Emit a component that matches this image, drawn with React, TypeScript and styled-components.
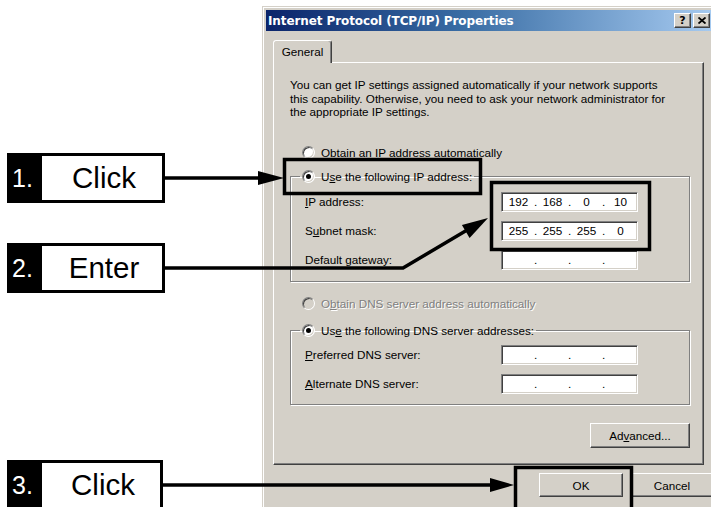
import styled, { createGlobalStyle } from "styled-components";

const FACE = "#d4d0c8";

const GlobalStyle = createGlobalStyle`
  html, body {
    margin: 0;
    padding: 0;
    background: #fff;
  }
  body {
    font-family: "Liberation Sans", Arial, sans-serif;
  }
`;

const Page = styled.div`
  position: relative;
  width: 711px;
  height: 507px;
  overflow: hidden;
  display: flex;
  background: #fff;
`;

/* ---------- left callouts ---------- */

const Callouts = styled.div`
  width: 262px;
  flex: none;
  display: flex;
  flex-direction: column;
  padding-left: 7px;
  box-sizing: border-box;
`;

const Callout = styled.div<{ $top: number; $width: number }>`
  margin-top: ${(p) => p.$top}px;
  width: ${(p) => p.$width}px;
  height: 50px;
  flex: none;
  box-sizing: border-box;
  border: 3px solid #000;
  display: flex;
  align-items: center;
  background: #fff;
`;

const StepNo = styled.div`
  align-self: stretch;
  width: 32px;
  flex: none;
  background: #000;
  color: #fff;
  font-size: 25px;
  display: flex;
  align-items: center;
  padding-left: 2px;
  box-sizing: border-box;
`;

const StepLabel = styled.div`
  flex: 1;
  text-align: center;
  font-size: 29.5px;
  color: #000;
  padding-left: 4px;
`;

/* ---------- dialog ---------- */

const Dialog = styled.div`
  margin-top: 6px;
  width: 454px;
  height: 520px;
  flex: none;
  box-sizing: border-box;
  background: ${FACE};
  border: 1px solid;
  border-color: ${FACE} #404040 #404040 ${FACE};
  box-shadow: inset 1px 1px #fff, inset -1px -1px #808080;
  padding: 3px;
  font-family: "Liberation Sans", Arial, sans-serif;
  font-size: 11.7px;
  color: #000;
`;

const TitleBar = styled.div`
  height: 21px;
  display: flex;
  align-items: center;
  justify-content: space-between;
  padding: 0 2px 0 2px;
  background: linear-gradient(90deg, #0a246a 0%, #3a6ea5 45%, #a6caf0 100%);
`;

const Title = styled.span`
  font-family: "DejaVu Sans", Verdana, sans-serif;
  font-weight: bold;
  font-size: 12px;
  color: #fff;
  letter-spacing: -0.1px;
`;

const CaptionButtons = styled.div`
  display: flex;
  gap: 2px;
`;

const CaptionButton = styled.div`
  width: 17px;
  height: 15px;
  box-sizing: border-box;
  background: ${FACE};
  border: 1px solid;
  border-color: #fff #404040 #404040 #fff;
  box-shadow: inset -1px -1px #808080;
  display: flex;
  align-items: center;
  justify-content: center;
  font-family: "DejaVu Sans", sans-serif;
  font-weight: bold;
  font-size: 11px;
  line-height: 1;
  color: #000;
`;

const DialogBody = styled.div`
  padding: 9px 5px 0 7px;
`;

const TabStrip = styled.div`
  display: flex;
  height: 22px;
`;

const Tab = styled.div`
  position: relative;
  z-index: 1;
  width: 59px;
  height: 23px;
  box-sizing: border-box;
  background: ${FACE};
  border: 1px solid;
  border-bottom: none;
  border-color: #fff #404040 transparent #fff;
  border-radius: 3px 3px 0 0;
  box-shadow: inset -1px 0 #808080;
  display: flex;
  align-items: center;
  justify-content: center;
  padding-bottom: 2px;
`;

const Panel = styled.div`
  width: 431px;
  height: 403px;
  box-sizing: border-box;
  border: 1px solid;
  border-color: #fff #404040 #404040 #fff;
  box-shadow: inset -1px -1px #808080;
  padding: 15px 13px 0 16px;
  display: flex;
  flex-direction: column;
`;

const Intro = styled.p`
  margin: 0;
  line-height: 13.5px;
  white-space: nowrap;
`;

const RadioRow = styled.div<{ $top: number; $disabled?: boolean }>`
  display: flex;
  align-items: center;
  gap: 6px;
  height: 16px;
  margin: ${(p) => p.$top}px 0 0 12px;
  white-space: nowrap;
  color: ${(p) => (p.$disabled ? "#808080" : "#000")};
  text-shadow: ${(p) => (p.$disabled ? "1px 1px 0 #fff" : "none")};
`;

const Radio = styled.span<{ $checked?: boolean; $disabled?: boolean }>`
  position: relative;
  width: 13px;
  height: 13px;
  flex: none;
  box-sizing: border-box;
  border-radius: 50%;
  background: ${(p) => (p.$disabled ? FACE : "#fff")};
  border: 1px solid;
  border-color: #808080 #fff #fff #808080;
  box-shadow: inset 1px 1px #404040, inset -1px -1px ${FACE};
  &::after {
    content: "";
    display: ${(p) => (p.$checked ? "block" : "none")};
    position: absolute;
    left: 3px;
    top: 3px;
    width: 5px;
    height: 5px;
    border-radius: 50%;
    background: #000;
  }
`;

const Group = styled.fieldset<{ $top: number; $bottom: number }>`
  margin: ${(p) => p.$top}px 0 0 0;
  padding: 0 51px ${(p) => p.$bottom}px 9px;
  width: 400px;
  min-inline-size: 0;
  box-sizing: border-box;
  border: 1px solid #808080;
  box-shadow: 1px 1px 0 #fff, inset 1px 1px 0 #fff;
`;

const GroupLegend = styled.legend`
  padding: 0 2px;
  display: flex;
  align-items: center;
  gap: 6px;
  height: 16px;
  white-space: nowrap;
`;

const FieldGrid = styled.div<{ $top: number }>`
  margin-top: ${(p) => p.$top}px;
  display: grid;
  grid-template-columns: 1fr 137px;
  row-gap: 9px;
  align-items: center;
`;

const FieldLabel = styled.span`
  padding-left: 5px;
  white-space: nowrap;
`;

const IpField = styled.div`
  height: 20px;
  box-sizing: border-box;
  background: #fff;
  border: 1px solid;
  border-color: #808080 #fff #fff #808080;
  box-shadow: inset 1px 1px #404040, inset -1px -1px ${FACE};
  display: flex;
  align-items: center;
  padding: 0 2px;
`;

const Octet = styled.span`
  flex: 1;
  text-align: center;
`;

const Dot = styled.span`
  width: 5px;
  text-align: center;
`;

const ButtonRow = styled.div<{ $top: number }>`
  display: flex;
  justify-content: flex-end;
  gap: 7px;
  margin-top: ${(p) => p.$top}px;
`;

const Button = styled.div<{ $width: number; $height: number }>`
  width: ${(p) => p.$width}px;
  height: ${(p) => p.$height}px;
  box-sizing: border-box;
  background: ${FACE};
  border: 1px solid;
  border-color: #fff #404040 #404040 #fff;
  box-shadow: inset -1px -1px #808080;
  display: flex;
  align-items: center;
  justify-content: center;
`;

const Footer = styled(ButtonRow)`
  width: 441px;
`;

/* ---------- annotation overlay ---------- */

const Overlay = styled.svg`
  position: absolute;
  left: 0;
  top: 0;
  width: 711px;
  height: 507px;
  pointer-events: none;
`;

function IpInput({ value }: { value: string[] }) {
  return (
    <IpField>
      <Octet>{value[0]}</Octet>
      <Dot>.</Dot>
      <Octet>{value[1]}</Octet>
      <Dot>.</Dot>
      <Octet>{value[2]}</Octet>
      <Dot>.</Dot>
      <Octet>{value[3]}</Octet>
    </IpField>
  );
}

const empty = ["", "", "", ""];

export default function App() {
  return (
    <Page>
      <GlobalStyle />
      <Callouts>
        <Callout $top={153} $width={158}>
          <StepNo>1.</StepNo>
          <StepLabel>Click</StepLabel>
        </Callout>
        <Callout $top={40} $width={158}>
          <StepNo>2.</StepNo>
          <StepLabel>Enter</StepLabel>
        </Callout>
        <Callout $top={167} $width={156}>
          <StepNo>3.</StepNo>
          <StepLabel>Click</StepLabel>
        </Callout>
      </Callouts>

      <Dialog>
        <TitleBar>
          <Title>Internet Protocol (TCP/IP) Properties</Title>
          <CaptionButtons>
            <CaptionButton>?</CaptionButton>
            <CaptionButton>
              <svg width="8" height="7" viewBox="0 0 8 7">
                <path d="M0.5 0.5 L7.5 6.5 M7.5 0.5 L0.5 6.5" stroke="#000" strokeWidth="1.8" />
              </svg>
            </CaptionButton>
          </CaptionButtons>
        </TitleBar>

        <DialogBody>
          <TabStrip>
            <Tab>General</Tab>
          </TabStrip>
          <Panel>
            <Intro>
              You can get IP settings assigned automatically if your network supports
              <br />
              this capability. Otherwise, you need to ask your network administrator for
              <br />
              the appropriate IP settings.
            </Intro>

            <RadioRow $top={26}>
              <Radio />
              <span>
                <u>O</u>btain an IP address automatically
              </span>
            </RadioRow>

            <Group $top={8} $bottom={11}>
              <GroupLegend>
                <Radio $checked />
                <span>
                  U<u>s</u>e the following IP address:
                </span>
              </GroupLegend>
              <FieldGrid $top={7}>
                <FieldLabel>
                  <u>I</u>P address:
                </FieldLabel>
                <IpInput value={["192", "168", "0", "10"]} />
                <FieldLabel>
                  S<u>u</u>bnet mask:
                </FieldLabel>
                <IpInput value={["255", "255", "255", "0"]} />
                <FieldLabel>
                  Default <u>g</u>ateway:
                </FieldLabel>
                <IpInput value={empty} />
              </FieldGrid>
            </Group>

            <RadioRow $top={14} $disabled>
              <Radio $disabled />
              <span>
                O<u>b</u>tain DNS server address automatically
              </span>
            </RadioRow>

            <Group $top={11} $bottom={10}>
              <GroupLegend>
                <Radio $checked />
                <span>
                  Us<u>e</u> the following DNS server addresses:
                </span>
              </GroupLegend>
              <FieldGrid $top={6}>
                <FieldLabel>
                  <u>P</u>referred DNS server:
                </FieldLabel>
                <IpInput value={empty} />
                <FieldLabel>
                  <u>A</u>lternate DNS server:
                </FieldLabel>
                <IpInput value={empty} />
              </FieldGrid>
            </Group>

            <ButtonRow $top={18}>
              <Button $width={100} $height={25}>
                <span>
                  Ad<u>v</u>anced...
                </span>
              </Button>
            </ButtonRow>
          </Panel>

          <Footer $top={8}>
            <Button $width={84} $height={24}>OK</Button>
            <Button $width={84} $height={24}>Cancel</Button>
          </Footer>
        </DialogBody>
      </Dialog>

      <Overlay viewBox="0 0 711 507">
        <g fill="none" stroke="#000" strokeWidth="3.5">
          <rect x="284.5" y="159.5" width="196" height="34" />
          <rect x="491.5" y="182.5" width="158" height="67" />
          <rect x="515.5" y="467.5" width="116" height="44" />
          <path d="M165 178 H262" />
          <path d="M165 268 H403 L468 229.5" />
          <path d="M163 485 H494" />
        </g>
        <g fill="#000">
          <polygon points="258,171 284,178 258,185" />
          <polygon points="469.6,238 488,218 461.9,225" />
          <polygon points="490,478 514,485 490,492" />
        </g>
      </Overlay>
    </Page>
  );
}
